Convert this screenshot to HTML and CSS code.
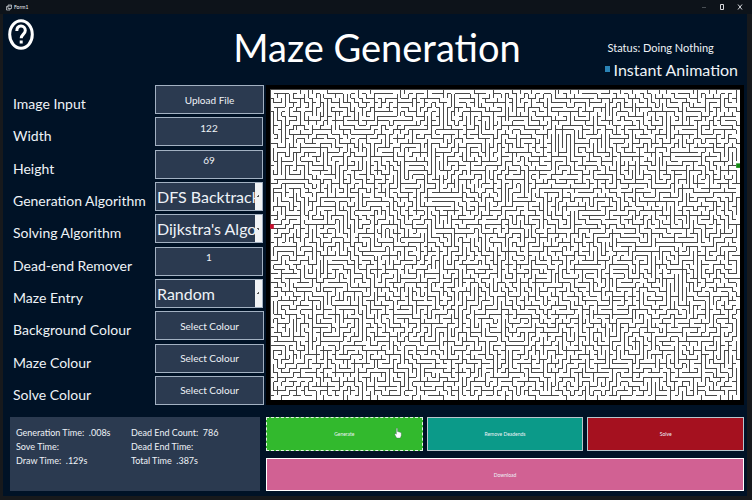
FILE: index.html
```html
<!DOCTYPE html>
<html lang="en">
<head>
<meta charset="utf-8">
<title>Form1</title>
<link rel="stylesheet" href="styles.css">
</head>
<body>
<div class="window">
  <header class="titlebar">
    <svg class="app-icon" viewBox="0 0 12 12" aria-hidden="true"><path d="M4 1h7v7H4zM4 4H1v7h7V8M4 3h7"/></svg>
    <span class="caption">Form1</span>
    <button class="win-btn dim" aria-label="Minimise"><svg viewBox="0 0 8 8"><path d="M2 4.500h4"/></svg></button>
    <button class="win-btn" aria-label="Maximise"><svg viewBox="0 0 8 8"><path d="M2.500 1.500h3v5h-3z"/></svg></button>
    <button class="win-btn" aria-label="Close"><svg viewBox="0 0 8 8"><path d="M2 1.500l4 5M6 1.500l-4 5"/></svg></button>
  </header>
  <main class="content">
    <div class="top">
      <button class="help" aria-label="Help">
        <svg viewBox="0 0 26 31"><ellipse cx="13" cy="15.500" rx="11.300" ry="13.800"/><path d="M8.800 12C8.800 8.600 10.500 7 13 7s4.300 1.700 4.300 4.400c0 3.600-4.100 4.300-4.100 7.800"/><path d="M13.200 21.500v3"/></svg>
      </button>
      <h1 class="title">Maze Generation</h1>
      <div class="status">
        <p class="status-text">Status: Doing Nothing</p>
        <label class="instant"><input type="checkbox" checked>Instant Animation</label>
      </div>
    </div>
    <div class="middle">
      <form class="settings">
        <label for="upload">Image Input</label><button type="button" id="upload">Upload File</button>
        <label for="width">Width</label><input id="width" type="text" value="122">
        <label for="height">Height</label><input id="height" type="text" value="69">
        <label for="gen">Generation Algorithm</label><select id="gen"><option>DFS Backtracker</option></select>
        <label for="solver">Solving Algorithm</label><select id="solver"><option>Dijkstra's Algorithm</option></select>
        <label for="dead">Dead-end Remover</label><input id="dead" type="text" value="1">
        <label for="entry">Maze Entry</label><select id="entry"><option>Random</option></select>
        <label for="bg">Background Colour</label><button type="button" id="bg">Select Colour</button>
        <label for="mc">Maze Colour</label><button type="button" id="mc">Select Colour</button>
        <label for="sc">Solve Colour</label><button type="button" id="sc">Select Colour</button>
      </form>
      <div class="board">
        <svg id="maze" class="maze" viewBox="0 0 122 69" preserveAspectRatio="none" role="img" aria-label="Maze"></svg>
      </div>
    </div>
    <div class="bottom">
      <section class="stats">
        <div><p>Generation Time: &nbsp;.008s</p><p>Sove Time:</p><p>Draw Time: &nbsp;.129s</p></div>
        <div><p>Dead End Count: &nbsp;786</p><p>Dead End Time:</p><p>Total Time &nbsp;.387s</p></div>
      </section>
      <div class="actions">
        <button class="action generate">Generate
          <svg class="pointer" viewBox="0 0 12 20" aria-hidden="true"><path d="M3.500 2v9L1.500 10 1 11.500 4 17h5.500l1.500-4V9L9 8 5.200 7V2z"/></svg>
        </button>
        <button class="action remove">Remove Deadends</button>
        <button class="action solve">Solve</button>
        <button class="action download">Download</button>
      </div>
    </div>
  </main>
</div>
<script src="maze.js"></script>
</body>
</html>
```
FILE: styles.css
```css
* { box-sizing: border-box; }
body {
  margin: 0;
  background: #17191c;
  color: #eef2f7;
  font-family: Lato, "Open Sans", sans-serif;
}
button, input, select { font: inherit; color: inherit; border-radius: 0; margin: 0; padding: 0; }
p, h1 { margin: 0; }
.window {
  min-height: 100vh;
  display: flex;
  flex-direction: column;
  padding-bottom: 4px;
}
.titlebar {
  display: flex;
  align-items: center;
  height: 14px;
  padding: 0 3px 0 6px;
  background: #0d131a;
  font-size: 5px;
}
.app-icon { width: 6px; height: 7px; fill: none; stroke: #c8cdd2; stroke-width: 1.5; }
.caption { flex: 1; padding-left: 2px; }
.win-btn { width: 18px; height: 14px; border: 0; background: none; }
.win-btn svg { width: 8px; height: 8px; display: block; margin: 0 auto; fill: none; stroke: #d5d8dc; stroke-width: 1; }
.win-btn.dim { opacity: .3; }
.content {
  flex: 1;
  display: flex;
  flex-direction: column;
  margin: 0 5px 0 3px;
  background: #001226;
}
.top {
  display: grid;
  grid-template-columns: 1fr auto 1fr;
  height: 71px;
  padding: 0 9px 0 5px;
}
.help { justify-self: start; align-self: start; width: 26px; height: 31px; margin-top: 5px; border: 0; background: none; }
.help svg { display: block; width: 26px; height: 31px; fill: none; stroke: #fff; stroke-width: 3; }
.title { font-size: 38px; line-height: 66px; font-weight: 400; color: #fff; padding-left: 8px; }
.status { justify-self: end; padding-top: 26px; }
.status-text { font-size: 11px; line-height: 16px; padding-left: 3px; }
.instant { display: flex; align-items: center; gap: 4px; font-size: 16px; line-height: 28px; }
.instant input { appearance: none; width: 5px; height: 6px; background: #2a83b5; margin: 0 0 2px; }
.middle { display: flex; gap: 2px; padding: 0 3px 0 10px; }
.settings {
  flex: none;
  display: grid;
  grid-template-columns: 142px 109px;
  grid-auto-rows: 29px;
  row-gap: 3px;
  align-content: space-between;
  height: 320px;
}
.settings label { font-size: 14px; line-height: 37px; white-space: nowrap; }
.settings button, .settings input, .settings select {
  width: 100%;
  height: 29px;
  border: 1px solid #a3b1c2;
  background-color: #2b3a50;
  font-size: 10px;
}
.settings input { width: 108px; text-align: center; padding-bottom: 8px; }
.settings select {
  appearance: none;
  width: 108px;
  padding: 0 7px 0 1px;
  font-size: 16px;
  text-overflow: clip;
  background-image: radial-gradient(circle, #555 0 1px, #f1f3f5 1px);
  background-position: right center;
  background-size: 7px 100%;
  background-repeat: no-repeat;
}
.board { flex: 1; display: flex; background: #000; padding: 4px 4px 5px; }
.maze { flex: 1; min-width: 0; height: 100%; max-height: 311px; display: block; background: #fff; }
.maze path { fill: none; stroke: #484848; stroke-width: 1; vector-effect: non-scaling-stroke; shape-rendering: crispEdges; }
.maze .start { fill: #c8102e; }
.maze .end { fill: #128a12; }
.bottom { display: flex; gap: 6px; padding: 12px 3px 5px 7px; }
.stats {
  flex: none;
  width: 250px;
  display: grid;
  grid-template-columns: 115px 1fr;
  padding: 9px 6px;
  background: #2b3a50;
  font-size: 9px;
  line-height: 14px;
}
.actions {
  flex: 1;
  display: grid;
  grid-template-columns: repeat(3, 1fr);
  grid-template-rows: 34px 33px;
  gap: 7px 4px;
}
.action { position: relative; border: 1px solid #b9c6cc; font-size: 5px; }
.generate { background: #32b92d; border: 1px dashed #e6f5e5; }
.remove { background: #0b9a89; }
.solve { background: #a5111f; }
.download { grid-column: 1 / -1; background: #d16193; border: 1px solid #fff; }
.pointer { position: absolute; left: 82%; top: 9px; width: 8px; height: 13px; fill: #fff; stroke: #456; stroke-width: .5; }
```
FILE: maze.js
```js
// Depth-first backtracking maze, drawn as one path of wall segments.
const W = 122, H = 69;
let seed = 20231;
function random() {
  seed = (seed * 1664525 + 1013904223) % 4294967296;
  return seed / 4294967296;
}
const seen = new Uint8Array(W * H);
const right = new Uint8Array(W * H).fill(1);
const below = new Uint8Array(W * H).fill(1);
const stack = [30 * W];
seen[30 * W] = 1;
while (stack.length) {
  const c = stack[stack.length - 1];
  const x = c % W, y = (c - x) / W;
  const next = [];
  if (x > 0 && !seen[c - 1]) next.push(c - 1);
  if (x < W - 1 && !seen[c + 1]) next.push(c + 1);
  if (y > 0 && !seen[c - W]) next.push(c - W);
  if (y < H - 1 && !seen[c + W]) next.push(c + W);
  if (!next.length) { stack.pop(); continue; }
  const n = next[Math.floor(random() * next.length)];
  if (n === c + 1) right[c] = 0;
  else if (n === c - 1) right[n] = 0;
  else if (n === c + W) below[c] = 0;
  else below[n] = 0;
  seen[n] = 1;
  stack.push(n);
}
let d = "M0 0H" + W + "V" + H + "H0Z";
for (let y = 0; y < H; y++) {
  for (let x = 0; x < W; x++) {
    const c = y * W + x;
    if (right[c] && x < W - 1) d += "M" + (x + 1) + " " + y + "v1";
    if (below[c] && y < H - 1) d += "M" + x + " " + (y + 1) + "h1";
  }
}
document.getElementById("maze").innerHTML =
  '<path d="' + d + '"/>' +
  '<rect class="start" x="0" y="30" width="1" height="1"/>' +
  '<rect class="end" x="121" y="16.500" width="1" height="1"/>';
```
